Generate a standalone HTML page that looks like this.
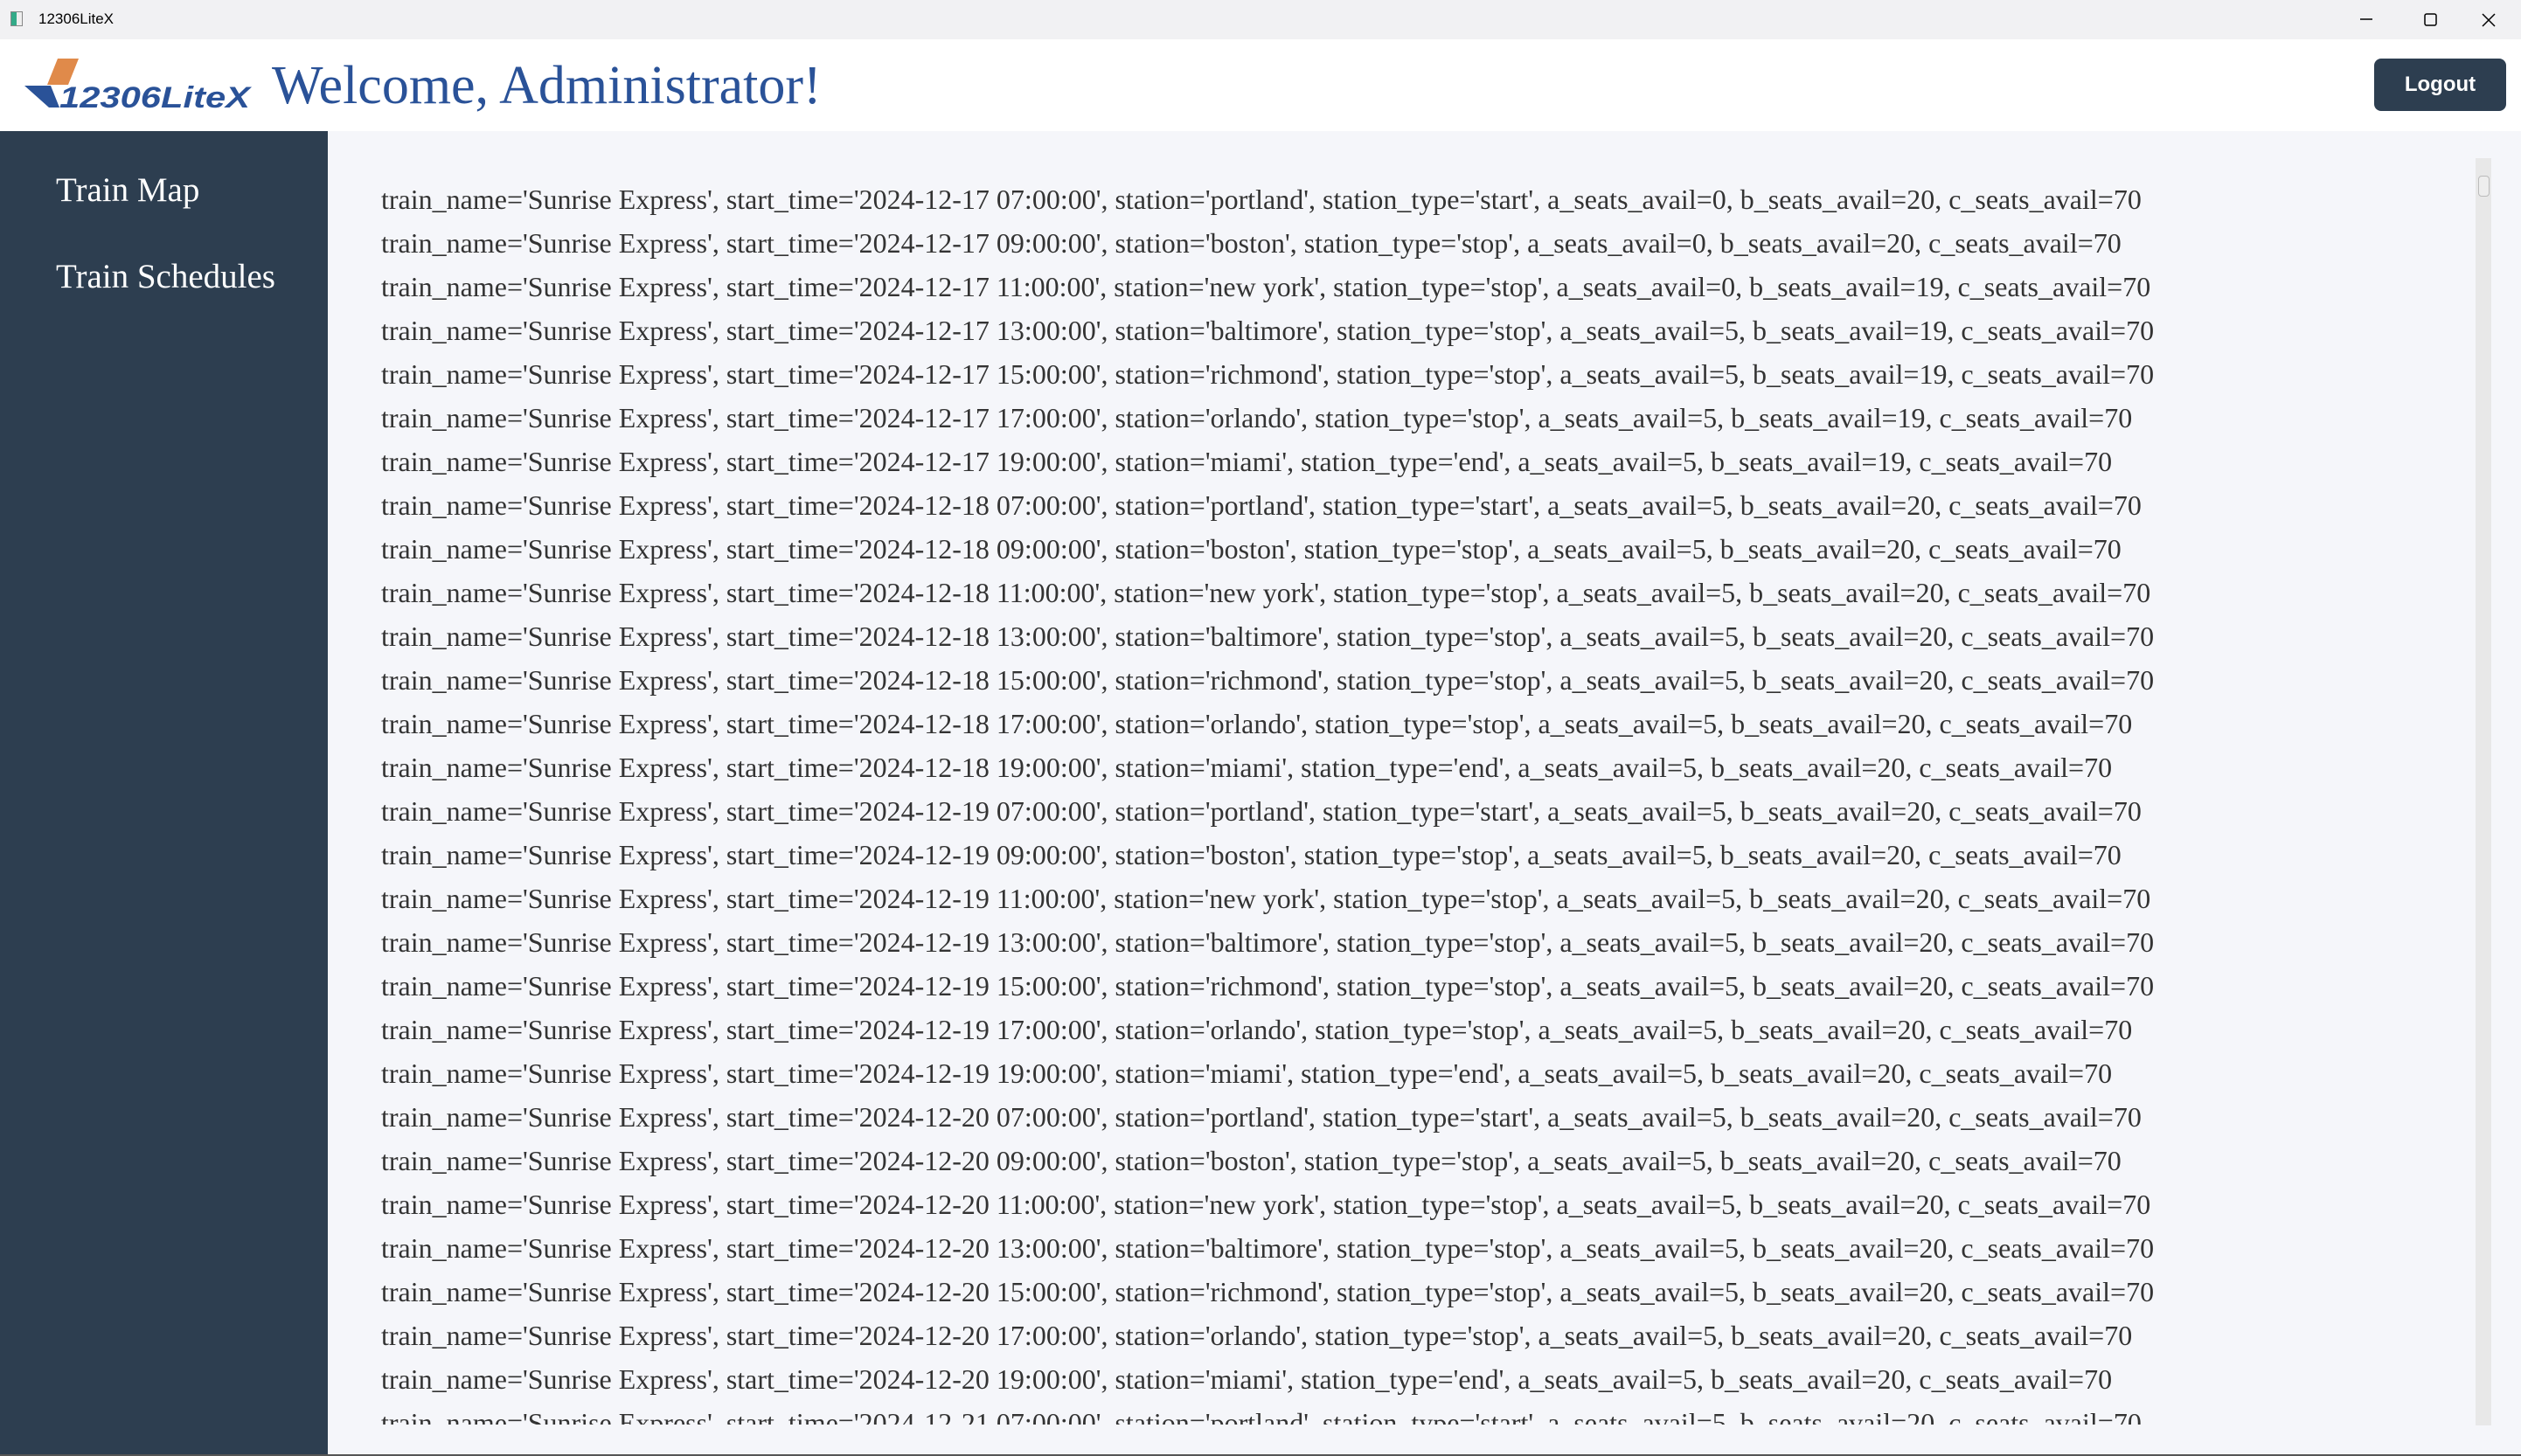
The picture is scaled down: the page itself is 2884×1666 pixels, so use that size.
<!DOCTYPE html>
<html><head><meta charset="utf-8"><style>
*{margin:0;padding:0;box-sizing:border-box}
body{width:2884px;height:1666px;overflow:hidden;background:#f5f6fa;position:relative;font-family:"Liberation Serif",serif}
.tb{position:absolute;left:0;top:0;width:2884px;height:45px;background:#f1f1f3;font-family:"Liberation Sans",sans-serif;font-size:17px;color:#000}
.tb .t{position:absolute;left:44px;top:12px}
.tb .ic{position:absolute;left:12px;top:13px;width:14px;height:17px;border:1px solid #888;background:linear-gradient(90deg,#3a8 0,#3a8 50%,#eee 50%)}
.hd{position:absolute;left:0;top:45px;width:2884px;height:105px;background:#fff}
.title{position:absolute;left:311px;top:17px;font-size:62px;line-height:72px;color:#2a5298;white-space:nowrap}
.btn{position:absolute;left:2716px;top:22px;width:151px;height:60px;background:#2d3e50;border-radius:8px;color:#fff;font-family:"Liberation Sans",sans-serif;font-weight:bold;font-size:24px;text-align:center;line-height:60px}
.sb{position:absolute;left:0;top:150px;width:375px;height:1516px;background:#2d3e50}
.sb div{position:absolute;left:64px;color:#fff;font-size:39px}
.ct{position:absolute;left:436px;top:203px;width:2380px;height:1427px;overflow:hidden;color:#333;font-size:32px;line-height:50px;white-space:nowrap}
.scr{position:absolute;left:2832px;top:181px;width:18px;height:1450px;background:#e8e8e8}
.thumb{position:absolute;left:2835px;top:201px;width:13px;height:24px;border:1px solid #bbb;border-radius:4px;background:#eee}
.bot{position:absolute;left:0;top:1664px;width:2884px;height:2px;background:#555}
</style></head><body>
<div class="tb"><div class="ic"></div><div class="t">12306LiteX</div>
<svg style="position:absolute;left:2690px;top:10px" width="180" height="26"><line x1="10" y1="12" x2="24" y2="12" stroke="#000" stroke-width="1.5"/><rect x="84" y="6" width="13" height="13" rx="2" fill="none" stroke="#000" stroke-width="1.5"/><path d="M150 6 L164 20 M164 6 L150 20" stroke="#000" stroke-width="1.5"/></svg></div>
<div class="hd">
<svg style="position:absolute;left:28px;top:22px" width="262" height="62" viewBox="0 0 262 62">
<polygon points="38,0 62,0 50,30 26,30" fill="#e08a4a"/>
<polygon points="0,31 30,31 40,56 28,56" fill="#2a5298"/>
<text x="40" y="56" font-family="Liberation Sans,sans-serif" font-weight="bold" font-style="italic" font-size="34" fill="#2a5298" textLength="218" lengthAdjust="spacingAndGlyphs">12306LiteX</text>
</svg>
<div class="title">Welcome, Administrator!</div>
<div class="btn">Logout</div>
</div>
<div class="sb"><div style="top:45px">Train Map</div><div style="top:144px">Train Schedules</div></div>
<div class="ct" id="ct">
<div>train_name='Sunrise Express', start_time='2024-12-17 07:00:00', station='portland', station_type='start', a_seats_avail=0, b_seats_avail=20, c_seats_avail=70</div>
<div>train_name='Sunrise Express', start_time='2024-12-17 09:00:00', station='boston', station_type='stop', a_seats_avail=0, b_seats_avail=20, c_seats_avail=70</div>
<div>train_name='Sunrise Express', start_time='2024-12-17 11:00:00', station='new york', station_type='stop', a_seats_avail=0, b_seats_avail=19, c_seats_avail=70</div>
<div>train_name='Sunrise Express', start_time='2024-12-17 13:00:00', station='baltimore', station_type='stop', a_seats_avail=5, b_seats_avail=19, c_seats_avail=70</div>
<div>train_name='Sunrise Express', start_time='2024-12-17 15:00:00', station='richmond', station_type='stop', a_seats_avail=5, b_seats_avail=19, c_seats_avail=70</div>
<div>train_name='Sunrise Express', start_time='2024-12-17 17:00:00', station='orlando', station_type='stop', a_seats_avail=5, b_seats_avail=19, c_seats_avail=70</div>
<div>train_name='Sunrise Express', start_time='2024-12-17 19:00:00', station='miami', station_type='end', a_seats_avail=5, b_seats_avail=19, c_seats_avail=70</div>
<div>train_name='Sunrise Express', start_time='2024-12-18 07:00:00', station='portland', station_type='start', a_seats_avail=5, b_seats_avail=20, c_seats_avail=70</div>
<div>train_name='Sunrise Express', start_time='2024-12-18 09:00:00', station='boston', station_type='stop', a_seats_avail=5, b_seats_avail=20, c_seats_avail=70</div>
<div>train_name='Sunrise Express', start_time='2024-12-18 11:00:00', station='new york', station_type='stop', a_seats_avail=5, b_seats_avail=20, c_seats_avail=70</div>
<div>train_name='Sunrise Express', start_time='2024-12-18 13:00:00', station='baltimore', station_type='stop', a_seats_avail=5, b_seats_avail=20, c_seats_avail=70</div>
<div>train_name='Sunrise Express', start_time='2024-12-18 15:00:00', station='richmond', station_type='stop', a_seats_avail=5, b_seats_avail=20, c_seats_avail=70</div>
<div>train_name='Sunrise Express', start_time='2024-12-18 17:00:00', station='orlando', station_type='stop', a_seats_avail=5, b_seats_avail=20, c_seats_avail=70</div>
<div>train_name='Sunrise Express', start_time='2024-12-18 19:00:00', station='miami', station_type='end', a_seats_avail=5, b_seats_avail=20, c_seats_avail=70</div>
<div>train_name='Sunrise Express', start_time='2024-12-19 07:00:00', station='portland', station_type='start', a_seats_avail=5, b_seats_avail=20, c_seats_avail=70</div>
<div>train_name='Sunrise Express', start_time='2024-12-19 09:00:00', station='boston', station_type='stop', a_seats_avail=5, b_seats_avail=20, c_seats_avail=70</div>
<div>train_name='Sunrise Express', start_time='2024-12-19 11:00:00', station='new york', station_type='stop', a_seats_avail=5, b_seats_avail=20, c_seats_avail=70</div>
<div>train_name='Sunrise Express', start_time='2024-12-19 13:00:00', station='baltimore', station_type='stop', a_seats_avail=5, b_seats_avail=20, c_seats_avail=70</div>
<div>train_name='Sunrise Express', start_time='2024-12-19 15:00:00', station='richmond', station_type='stop', a_seats_avail=5, b_seats_avail=20, c_seats_avail=70</div>
<div>train_name='Sunrise Express', start_time='2024-12-19 17:00:00', station='orlando', station_type='stop', a_seats_avail=5, b_seats_avail=20, c_seats_avail=70</div>
<div>train_name='Sunrise Express', start_time='2024-12-19 19:00:00', station='miami', station_type='end', a_seats_avail=5, b_seats_avail=20, c_seats_avail=70</div>
<div>train_name='Sunrise Express', start_time='2024-12-20 07:00:00', station='portland', station_type='start', a_seats_avail=5, b_seats_avail=20, c_seats_avail=70</div>
<div>train_name='Sunrise Express', start_time='2024-12-20 09:00:00', station='boston', station_type='stop', a_seats_avail=5, b_seats_avail=20, c_seats_avail=70</div>
<div>train_name='Sunrise Express', start_time='2024-12-20 11:00:00', station='new york', station_type='stop', a_seats_avail=5, b_seats_avail=20, c_seats_avail=70</div>
<div>train_name='Sunrise Express', start_time='2024-12-20 13:00:00', station='baltimore', station_type='stop', a_seats_avail=5, b_seats_avail=20, c_seats_avail=70</div>
<div>train_name='Sunrise Express', start_time='2024-12-20 15:00:00', station='richmond', station_type='stop', a_seats_avail=5, b_seats_avail=20, c_seats_avail=70</div>
<div>train_name='Sunrise Express', start_time='2024-12-20 17:00:00', station='orlando', station_type='stop', a_seats_avail=5, b_seats_avail=20, c_seats_avail=70</div>
<div>train_name='Sunrise Express', start_time='2024-12-20 19:00:00', station='miami', station_type='end', a_seats_avail=5, b_seats_avail=20, c_seats_avail=70</div>
<div>train_name='Sunrise Express', start_time='2024-12-21 07:00:00', station='portland', station_type='start', a_seats_avail=5, b_seats_avail=20, c_seats_avail=70</div>
</div>
<div class="scr"></div><div class="thumb"></div>
<div class="bot"></div>
</body></html>
